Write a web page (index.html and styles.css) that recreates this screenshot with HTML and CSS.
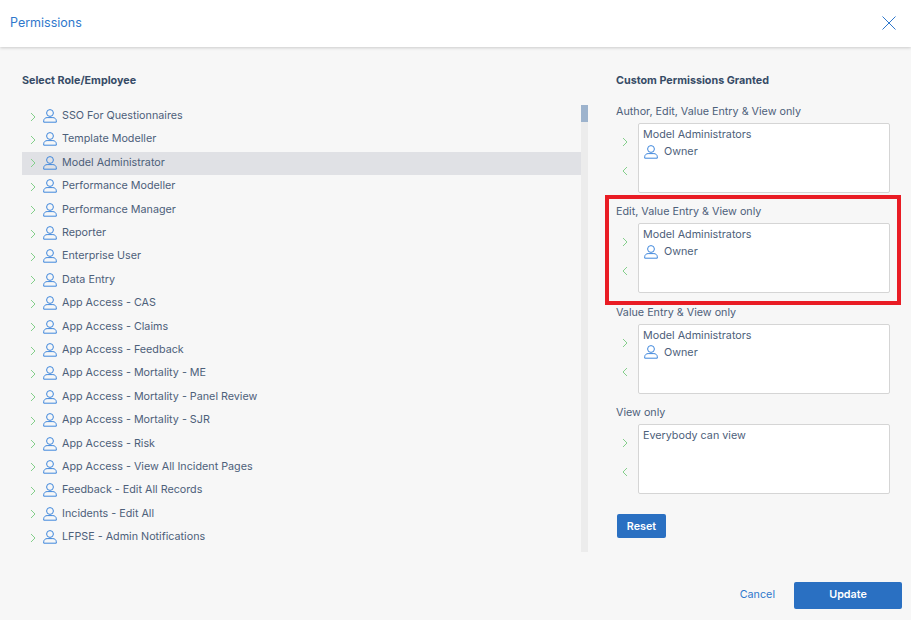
FILE: index.html
```html
<!DOCTYPE html>
<html lang="en">

<head>
    <meta charset="UTF-8">
    <meta name="viewport" content="width=device-width, initial-scale=1.0">
    <title>Permissions</title>
    <link rel="stylesheet" href="styles.css">
</head>

<body>
    <svg class="icon-defs" width="0" height="0">
        <symbol id="user" viewBox="0 0 14 14">
            <circle cx="7" cy="4" r="3.4" />
            <path d="M.7 13.2v-1.4c0-1.9 1.6-3.2 3.4-3.2h5.8c1.8 0 3.4 1.3 3.4 3.2v1.4z" />
        </symbol>
        <symbol id="right" viewBox="0 0 6 10">
            <path d="M1 1l4 4-4 4" />
        </symbol>
        <symbol id="left" viewBox="0 0 6 10">
            <path d="M5 1L1 5l4 4" />
        </symbol>
    </svg>

    <header class="modal-header">
        <h1 class="modal-title">Permissions</h1>
        <svg class="close-btn" viewBox="0 0 14 14"><path d="M.5.5l13 13M13.5.5l-13 13" /></svg>
    </header>

    <main class="modal-body">
        <section class="roles">
            <h2 class="section-title">Select Role/Employee</h2>
            <div class="role-scroll">
                <ul class="role-list">
                    <li class="role"><svg class="arrow"><use href="#right" /></svg><svg class="user"><use href="#user" /></svg>SSO For Questionnaires</li>
                    <li class="role"><svg class="arrow"><use href="#right" /></svg><svg class="user"><use href="#user" /></svg>Template Modeller</li>
                    <li class="role selected"><svg class="arrow"><use href="#right" /></svg><svg class="user"><use href="#user" /></svg>Model Administrator</li>
                    <li class="role"><svg class="arrow"><use href="#right" /></svg><svg class="user"><use href="#user" /></svg>Performance Modeller</li>
                    <li class="role"><svg class="arrow"><use href="#right" /></svg><svg class="user"><use href="#user" /></svg>Performance Manager</li>
                    <li class="role"><svg class="arrow"><use href="#right" /></svg><svg class="user"><use href="#user" /></svg>Reporter</li>
                    <li class="role"><svg class="arrow"><use href="#right" /></svg><svg class="user"><use href="#user" /></svg>Enterprise User</li>
                    <li class="role"><svg class="arrow"><use href="#right" /></svg><svg class="user"><use href="#user" /></svg>Data Entry</li>
                    <li class="role"><svg class="arrow"><use href="#right" /></svg><svg class="user"><use href="#user" /></svg>App Access - CAS</li>
                    <li class="role"><svg class="arrow"><use href="#right" /></svg><svg class="user"><use href="#user" /></svg>App Access - Claims</li>
                    <li class="role"><svg class="arrow"><use href="#right" /></svg><svg class="user"><use href="#user" /></svg>App Access - Feedback</li>
                    <li class="role"><svg class="arrow"><use href="#right" /></svg><svg class="user"><use href="#user" /></svg>App Access - Mortality - ME</li>
                    <li class="role"><svg class="arrow"><use href="#right" /></svg><svg class="user"><use href="#user" /></svg>App Access - Mortality - Panel Review</li>
                    <li class="role"><svg class="arrow"><use href="#right" /></svg><svg class="user"><use href="#user" /></svg>App Access - Mortality - SJR</li>
                    <li class="role"><svg class="arrow"><use href="#right" /></svg><svg class="user"><use href="#user" /></svg>App Access - Risk</li>
                    <li class="role"><svg class="arrow"><use href="#right" /></svg><svg class="user"><use href="#user" /></svg>App Access - View All Incident Pages</li>
                    <li class="role"><svg class="arrow"><use href="#right" /></svg><svg class="user"><use href="#user" /></svg>Feedback - Edit All Records</li>
                    <li class="role"><svg class="arrow"><use href="#right" /></svg><svg class="user"><use href="#user" /></svg>Incidents - Edit All</li>
                    <li class="role"><svg class="arrow"><use href="#right" /></svg><svg class="user"><use href="#user" /></svg>LFPSE - Admin Notifications</li>
                </ul>
                <div class="scroll-track"><div class="scroll-thumb"></div></div>
            </div>
        </section>

        <section class="granted">
            <h2 class="section-title">Custom Permissions Granted</h2>

            <div class="perm-group">
                <div class="perm-label">Author, Edit, Value Entry &amp; View only</div>
                <div class="perm-row">
                    <div class="perm-arrows"><svg class="arrow"><use href="#right" /></svg><svg class="arrow"><use href="#left" /></svg></div>
                    <div class="perm-box">
                        <div class="perm-name">Model Administrators</div>
                        <div class="perm-owner"><svg class="user"><use href="#user" /></svg>Owner</div>
                    </div>
                </div>
            </div>

            <div class="perm-group">
                <div class="perm-label">Edit, Value Entry &amp; View only</div>
                <div class="perm-row">
                    <div class="perm-arrows"><svg class="arrow"><use href="#right" /></svg><svg class="arrow"><use href="#left" /></svg></div>
                    <div class="perm-box">
                        <div class="perm-name">Model Administrators</div>
                        <div class="perm-owner"><svg class="user"><use href="#user" /></svg>Owner</div>
                    </div>
                </div>
                <div class="highlight"></div>
            </div>

            <div class="perm-group">
                <div class="perm-label">Value Entry &amp; View only</div>
                <div class="perm-row">
                    <div class="perm-arrows"><svg class="arrow"><use href="#right" /></svg><svg class="arrow"><use href="#left" /></svg></div>
                    <div class="perm-box">
                        <div class="perm-name">Model Administrators</div>
                        <div class="perm-owner"><svg class="user"><use href="#user" /></svg>Owner</div>
                    </div>
                </div>
            </div>

            <div class="perm-group">
                <div class="perm-label">View only</div>
                <div class="perm-row">
                    <div class="perm-arrows"><svg class="arrow"><use href="#right" /></svg><svg class="arrow"><use href="#left" /></svg></div>
                    <div class="perm-box">
                        <div class="perm-name">Everybody can view</div>
                    </div>
                </div>
            </div>

            <button class="reset-btn">Reset</button>
        </section>
    </main>

    <footer class="modal-footer">
        <a class="cancel-link">Cancel</a>
        <button class="update-btn">Update</button>
    </footer>
</body>

</html>
```

FILE: styles.css
```css
* {
    box-sizing: border-box;
}

html,
body {
    height: 100%;
}

body {
    margin: 0;
    display: flex;
    flex-direction: column;
    overflow: hidden;
    background-color: #f7f7f7;
    color: #4d607a;
    font-family: Inter, "Liberation Sans", sans-serif;
    font-size: 10.75px;
}

.icon-defs {
    position: absolute;
}

.modal-header {
    height: 47px;
    flex: none;
    display: flex;
    align-items: center;
    justify-content: space-between;
    padding: 0 15px 2px 10px;
    background-color: #fff;
    box-shadow: 0 1px 3px rgba(0, 0, 0, 0.18);
}

.modal-title {
    margin: 0;
    font-size: 12.5px;
    font-weight: 400;
    color: #2f78cc;
}

.close-btn {
    width: 14px;
    height: 14px;
    fill: none;
    stroke: #2f78cc;
    stroke-width: 1;
}

.modal-body {
    flex: 1;
    display: flex;
    padding: 27px 21px 0 22px;
}

.section-title {
    margin: 0;
    height: 14px;
    line-height: 14px;
    font-size: 10.75px;
    font-weight: 700;
    color: #364b66;
}

.roles {
    width: 566px;
    flex: none;
}

.role-scroll {
    display: flex;
    height: 447px;
    margin-top: 17px;
}

.role-list {
    flex: 1;
    margin: 0;
    padding: 0;
    list-style: none;
}

.role {
    height: 23.4px;
    display: flex;
    align-items: center;
    padding-left: 8px;
    padding-bottom: 2.2px;
}

.role.selected {
    background-color: #e0e1e5;
}

.arrow {
    width: 6px;
    height: 10px;
    flex: none;
    fill: none;
    stroke: #84cf8b;
    stroke-width: 1;
}

.role .arrow {
    margin-top: 2px;
}

.user {
    width: 14px;
    height: 14px;
    flex: none;
    fill: none;
    stroke: #3f87dc;
    stroke-width: 1;
}

.role .user {
    margin-left: 7px;
    margin-right: 5px;
    margin-top: 1px;
}

.scroll-track {
    width: 7px;
    background-color: #ececec;
}

.scroll-thumb {
    height: 17px;
    background-color: #9db3cd;
}

.granted {
    flex: 1;
    margin-left: 28px;
    display: flex;
    flex-direction: column;
}

.section-title + .perm-group {
    margin-top: 17px;
}

.perm-group {
    position: relative;
    height: 100.4px;
}

.perm-label {
    height: 14px;
    line-height: 14.8px;
}

.perm-row {
    display: flex;
    margin-top: 4px;
}

.perm-arrows {
    width: 22px;
    padding-left: 6px;
    padding-top: 14px;
    display: flex;
    flex-direction: column;
    gap: 19px;
}

.perm-box {
    width: 252px;
    height: 70px;
    padding: 4px 4px;
    background-color: #fff;
    border: 1px solid #d5d5d5;
    border-radius: 2px;
}

.perm-name {
    height: 14px;
    line-height: 14.8px;
}

.perm-owner {
    display: flex;
    align-items: center;
    height: 17px;
    margin-top: 1px;
    padding-left: 1px;
}

.perm-owner .user {
    margin-right: 6px;
}

/* red annotation box drawn over the second group */
.highlight {
    position: absolute;
    left: -11px;
    top: -10px;
    width: 296px;
    height: 110px;
    border: 4px solid #e91c24;
    pointer-events: none;
}

.reset-btn {
    align-self: flex-start;
    width: 49px;
    height: 24px;
    margin-left: 1px;
    margin-top: 7px;
    padding: 1px 0 0;
    border: none;
    border-radius: 2px;
    background-color: #2a70c2;
    color: #fff;
    font-family: inherit;
    font-size: 10.75px;
    font-weight: 600;
}

.modal-footer {
    height: 27px;
    margin-bottom: 11px;
    flex: none;
    display: flex;
    align-items: center;
    justify-content: flex-end;
    gap: 19px;
    padding-right: 9px;
}

.cancel-link {
    margin-bottom: 2px;
    color: #2f78cc;
}

.update-btn {
    width: 108px;
    height: 27px;
    padding: 0 0 2px;
    border: none;
    border-radius: 2px;
    background-color: #2a70c2;
    color: #fff;
    font-family: inherit;
    font-size: 10.75px;
    font-weight: 600;
}
```
